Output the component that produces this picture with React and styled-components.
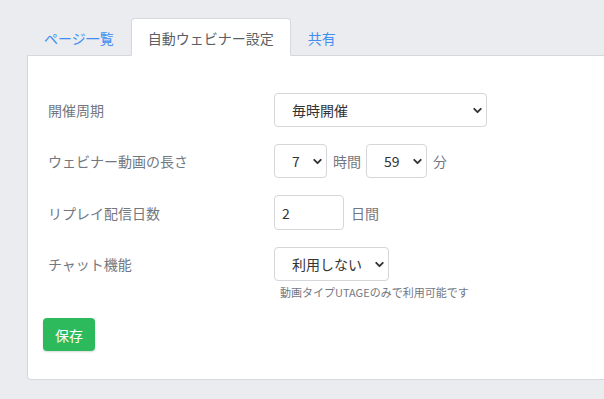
import React, { useState } from 'react';
import styled, { createGlobalStyle } from 'styled-components';
import { ChevronDown } from 'lucide-react';

const GlobalStyle = createGlobalStyle`
    body
    {
        margin: 0;
        background: #ebecef;
        font-family: "Noto Sans CJK JP", "Noto Sans", sans-serif;
    }
`;

const tabs = ["ページ一覧", "自動ウェビナー設定", "共有"];

const App = () =>
{
    const [active, setActive] = useState(1);

    return (
        <>
            <GlobalStyle />
            <Page>
                <TabBar>
                    {tabs.map((t, i) => (
                        <Tab key={t} $active={i === active} onClick={() => setActive(i)}>{t}</Tab>
                    ))}
                </TabBar>
                <Card>
                    <Row>
                        <Label>開催周期</Label>
                        <Controls>
                            <SelectBox $width={213}>
                                <select defaultValue="hourly">
                                    <option value="hourly">毎時開催</option>
                                    <option value="daily">毎日開催</option>
                                </select>
                                <Chevron><ChevronDown size={13} strokeWidth={3.5} /></Chevron>
                            </SelectBox>
                        </Controls>
                    </Row>
                    <Row>
                        <Label>ウェビナー動画の長さ</Label>
                        <Controls>
                            <SelectBox $width={53}>
                                <select defaultValue="7">
                                    {[...Array(24).keys()].map((h) => <option key={h}>{h}</option>)}
                                </select>
                                <Chevron><ChevronDown size={13} strokeWidth={3.5} /></Chevron>
                            </SelectBox>
                            <Unit>時間</Unit>
                            <SelectBox $width={61}>
                                <select defaultValue="59">
                                    {[...Array(60).keys()].map((m) => <option key={m}>{m}</option>)}
                                </select>
                                <Chevron><ChevronDown size={13} strokeWidth={3.5} /></Chevron>
                            </SelectBox>
                            <Unit>分</Unit>
                        </Controls>
                    </Row>
                    <Row>
                        <Label>リプレイ配信日数</Label>
                        <Controls>
                            <NumberInput defaultValue="2" />
                            <Unit $gap={7}>日間</Unit>
                        </Controls>
                    </Row>
                    <Row $tight>
                        <Label>チャット機能</Label>
                        <Controls $column>
                            <SelectBox $width={115}>
                                <select defaultValue="off">
                                    <option value="off">利用しない</option>
                                    <option value="on">利用する</option>
                                </select>
                                <Chevron><ChevronDown size={13} strokeWidth={3.5} /></Chevron>
                            </SelectBox>
                            <Help>動画タイプUTAGEのみで利用可能です</Help>
                        </Controls>
                    </Row>
                    <SaveButton>保存</SaveButton>
                </Card>
            </Page>
        </>
    );
};

const Page = styled.div`
    padding: 18px 0 20px 27px;
`;

const TabBar = styled.div`
    display: flex;
    align-items: flex-end;
    margin-bottom: -1px;
    position: relative;
    z-index: 1;
`;

const Tab = styled.div`
    height: 38px;
    box-sizing: border-box;
    padding: 1px 16px 0;
    display: flex;
    align-items: center;
    font-size: 14px;
    cursor: pointer;
    color: ${(p) => (p.$active ? "#5a5f66" : "#3f8ef0")};
    background: ${(p) => (p.$active ? "#fff" : "transparent")};
    border: 1px solid ${(p) => (p.$active ? "#d6d8dc" : "transparent")};
    border-bottom-color: ${(p) => (p.$active ? "#fff" : "transparent")};
    border-radius: 4px 4px 0 0;
`;

const Card = styled.div`
    background: #fff;
    border: 1px solid #d6d8dc;
    border-right: none;
    border-radius: 0 0 0 4px;
    padding: 37px 0 28px 15px;
`;

const Row = styled.div`
    display: flex;
    align-items: ${(p) => (p.$tight ? "flex-start" : "center")};
    margin-bottom: ${(p) => (p.$tight ? "18px" : "17px")};
`;

const Label = styled.div`
    width: 226px;
    padding-left: 5px;
    font-size: 14px;
    color: #73787f;
    line-height: 34px;
`;

const Controls = styled.div`
    display: flex;
    flex-direction: ${(p) => (p.$column ? "column" : "row")};
    align-items: ${(p) => (p.$column ? "flex-start" : "center")};
`;

const SelectBox = styled.div`
    position: relative;
    width: ${(p) => p.$width}px;
    height: 34px;

    select
    {
        appearance: none;
        width: 100%;
        height: 100%;
        box-sizing: border-box;
        border: 1px solid #d4d6da;
        border-radius: 4px;
        background: #fff;
        padding: 0 20px 0 17px;
        font-family: "Noto Sans CJK JP", "Noto Sans", sans-serif;
        font-size: 14px;
        color: #333;
        outline: none;
    }
`;

const Chevron = styled.span`
    position: absolute;
    right: 3px;
    top: 11px;
    color: #333;
    pointer-events: none;
    display: flex;
`;

const Unit = styled.span`
    font-size: 14px;
    color: #73787f;
    margin: 0 5px 0 ${(p) => p.$gap || 6}px;
`;

const NumberInput = styled.input`
    width: 70px;
    height: 35px;
    box-sizing: border-box;
    border: 1px solid #d4d6da;
    border-radius: 4px;
    padding: 0 7px;
    font-family: "Noto Sans CJK JP", "Noto Sans", sans-serif;
    font-size: 14px;
    color: #333;
    outline: none;
`;

const Help = styled.div`
    font-size: 11px;
    color: #73787f;
    margin: 3px 0 0 6px;
`;

const SaveButton = styled.button`
    background: #2dba5c;
    color: #fff;
    border: none;
    border-radius: 4px;
    height: 33px;
    padding: 0 12px;
    font-family: "Noto Sans CJK JP", "Noto Sans", sans-serif;
    font-size: 14px;
    box-shadow: 0 1px 2px rgba(0, 0, 0, 0.15);
    cursor: pointer;
`;

export default App;
